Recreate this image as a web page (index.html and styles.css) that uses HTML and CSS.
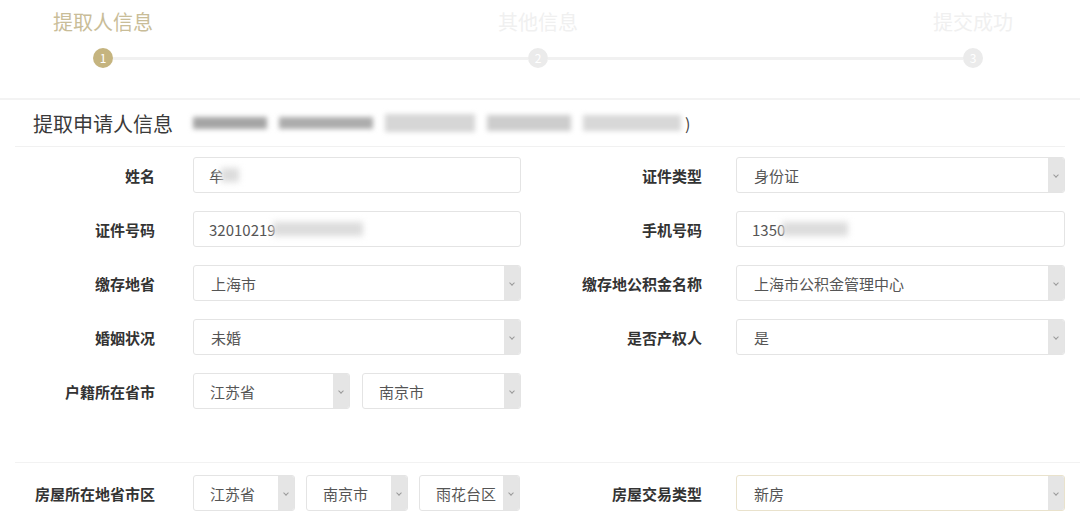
FILE: index.html
```html
<!DOCTYPE html>
<html lang="zh-CN">
  <head>
    <meta charset="UTF-8" />
    <meta name="viewport" content="width=device-width, initial-scale=1.0" />
    <title>提取申请</title>
    <link rel="stylesheet" href="styles.css">
  </head>
  <body>
    <div class="steps">
      <div class="step-titles">
        <div class="step-title active">提取人信息</div>
        <div class="step-title">其他信息</div>
        <div class="step-title">提交成功</div>
      </div>
      <div class="step-track">
        <span class="dot active">1</span>
        <span class="bar"></span>
        <span class="dot">2</span>
        <span class="bar"></span>
        <span class="dot">3</span>
      </div>
    </div>

    <div class="section-head">
      <span class="section-title">提取申请人信息</span>
      <span class="blur-line">
        <span class="blur b1"></span>
        <span class="blur b2"></span>
        <span class="blur b3"></span>
        <span class="blur b4"></span>
        <span class="blur b5"></span>
      </span>
      <span class="paren">)</span>
    </div>

    <div class="form">
      <div class="row">
        <label>姓名</label>
        <div class="input">牟<span class="blur mask" style="width:18px"></span></div>
        <label class="right">证件类型</label>
        <div class="select"><span>身份证</span><i class="arrow"></i></div>
      </div>
      <div class="row">
        <label>证件号码</label>
        <div class="input">32010219<span class="blur mask" style="width:90px"></span></div>
        <label class="right">手机号码</label>
        <div class="input">1350<span class="blur mask" style="width:66px"></span></div>
      </div>
      <div class="row">
        <label>缴存地省</label>
        <div class="select"><span>上海市</span><i class="arrow"></i></div>
        <label class="right">缴存地公积金名称</label>
        <div class="select"><span>上海市公积金管理中心</span><i class="arrow"></i></div>
      </div>
      <div class="row">
        <label>婚姻状况</label>
        <div class="select"><span>未婚</span><i class="arrow"></i></div>
        <label class="right">是否产权人</label>
        <div class="select"><span>是</span><i class="arrow"></i></div>
      </div>
      <div class="row">
        <label>户籍所在省市</label>
        <div class="group two">
          <div class="select"><span>江苏省</span><i class="arrow"></i></div>
          <div class="select"><span>南京市</span><i class="arrow"></i></div>
        </div>
      </div>
    </div>

    <div class="divider"></div>

    <div class="form">
      <div class="row">
        <label>房屋所在地省市区</label>
        <div class="group three">
          <div class="select"><span>江苏省</span><i class="arrow"></i></div>
          <div class="select"><span>南京市</span><i class="arrow"></i></div>
          <div class="select"><span>雨花台区</span><i class="arrow"></i></div>
        </div>
        <label class="right">房屋交易类型</label>
        <div class="select focus"><span>新房</span><i class="arrow"></i></div>
      </div>
    </div>
  </body>
</html>
```

FILE: styles.css
```css
body {
  margin: 0;
  padding: 0;
  background: #fff;
  font-family: "Noto Sans CJK SC", "Noto Sans", sans-serif;
  color: #333;
  overflow: hidden;
}

/* stepper */
.steps {
  height: 100px;
  border-bottom: 2px solid #f3f3f3;
  box-sizing: border-box;
}

.step-titles {
  display: grid;
  grid-template-columns: 206px 206px 206px;
  justify-content: space-between;
  padding: 7px 4px 0 0;
  height: 30px;
}

.step-title {
  text-align: center;
  font-size: 20px;
  line-height: 30px;
  color: #f0f0f0;
}

.step-title.active {
  color: #c9bd98;
}

.step-track {
  display: flex;
  align-items: center;
  padding: 11px 97px 0 93px;
}

.dot {
  width: 20px;
  height: 20px;
  border-radius: 50%;
  background: #ebebeb;
  color: #fff;
  font-size: 12px;
  line-height: 20px;
  text-align: center;
  flex: none;
}

.dot.active {
  background: #c5b47f;
}

.bar {
  flex: 1;
  height: 3px;
  background: #f1f1f1;
}

/* section header */
.section-head {
  display: flex;
  align-items: center;
  margin: 0 15px;
  padding: 0 0 0 18px;
  height: 46px;
  border-bottom: 1px solid #f1f1f1;
}

.section-title {
  font-size: 20px;
  color: #3a3a3a;
}

.blur-line {
  display: flex;
  align-items: center;
  gap: 12px;
  margin-left: 20px;
}

.blur {
  display: inline-block;
  height: 12px;
  background: #c8c8c8;
  filter: blur(2.5px);
}

.b1 { width: 74px; background: #a4a4a4; }
.b2 { width: 94px; background: #acacac; }
.b3 { width: 90px; height: 18px; background: #d6d6d6; }
.b4 { width: 84px; height: 16px; background: #cdcdcd; }
.b5 { width: 98px; height: 16px; background: #d8d8d8; }

.paren {
  margin-left: 4px;
  font-size: 16px;
  color: #444;
}

/* form */
.form {
  padding-top: 10px;
  display: flex;
  flex-direction: column;
  gap: 18px;
}

.row {
  display: grid;
  grid-template-columns: 193px 328px 215px 329px;
  align-items: center;
  height: 36px;
}

.row label {
  text-align: right;
  padding-right: 38px;
  font-size: 15px;
  font-weight: bold;
  color: #333;
}

.row label.right {
  padding-right: 34px;
}

.input,
.select {
  height: 36px;
  box-sizing: border-box;
  border: 1px solid #e4e4e4;
  border-radius: 3px;
  background: #fff;
  font-size: 15px;
  color: #555;
  display: flex;
  align-items: center;
}

.input {
  padding-left: 15px;
}

.select {
  padding-left: 17px;
}

.select span {
  flex: 1;
  white-space: nowrap;
}

.select.focus {
  border-color: #e9e2cc;
}

.arrow {
  width: 16px;
  align-self: stretch;
  background: #e5e5e5;
  border-radius: 0 2px 2px 0;
  position: relative;
}

.arrow::after {
  content: "";
  position: absolute;
  left: 6px;
  top: 15px;
  width: 3px;
  height: 3px;
  border-right: 1px solid #9a9a9a;
  border-bottom: 1px solid #9a9a9a;
  transform: rotate(45deg);
}

.mask {
  height: 14px;
  background: #dcdcdc;
  filter: blur(3px);
  margin-left: -3px;
}

.group {
  display: grid;
  gap: 12px;
}

.group.two {
  grid-template-columns: 157px 159px;
}

.group.three {
  grid-template-columns: 102px 102px 101px;
  gap: 11px;
}

.group .select {
  padding-left: 16px;
}

.divider {
  margin: 53px 0 2px 15px;
  border-top: 1px solid #f2f2f2;
}
```
